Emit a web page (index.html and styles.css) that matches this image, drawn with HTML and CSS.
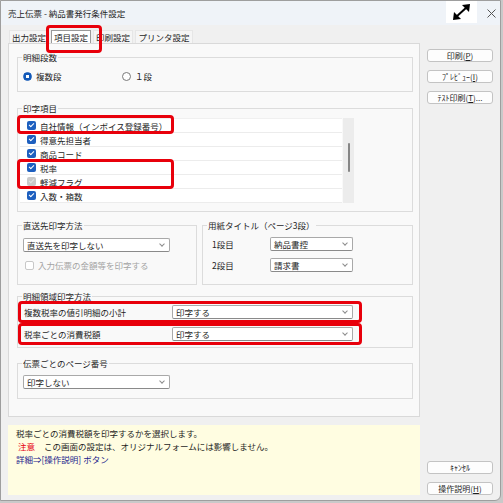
FILE: index.html
```html
<!DOCTYPE html>
<html lang="ja">
<head>
    <meta charset="UTF-8">
    <title>売上伝票 - 納品書発行条件設定</title>
    <link rel="stylesheet" href="styles.css">
</head>
<body>
<div class="window">
    <div class="titlebar">
        <span class="title">売上伝票 - 納品書発行条件設定</span>
        <span class="expand">
            <svg width="31" height="22" viewBox="0 0 31 22">
                <line x1="10" y1="16" x2="21" y2="6" stroke="#000" stroke-width="2"/>
                <polygon points="16,4 24,3 23,11" fill="#000"/>
                <polygon points="8,11 7,19 15,18" fill="#000"/>
            </svg>
        </span>
        <span class="close">
            <svg width="9" height="9" viewBox="0 0 9 9"><path d="M0.5 0.5 L8.5 8.5 M8.5 0.5 L0.5 8.5" stroke="#555" stroke-width="1"/></svg>
        </span>
    </div>

    <div class="client">
        <div class="main">
            <div class="tabs">
                <span class="tab">出力設定</span>
                <span class="tab active">項目設定</span>
                <span class="tab">印刷設定</span>
                <span class="tab tab-wide">プリンタ設定</span>
            </div>

            <div class="panel">
                <div class="grp grp-rows">
                    <div class="grp-title">明細段数</div>
                    <div class="radio-row">
                        <label class="radio-item"><span class="radio on"></span>複数段</label>
                        <label class="radio-item"><span class="radio"></span>１段</label>
                    </div>
                </div>

                <div class="grp grp-list">
                    <div class="grp-title">印字項目</div>
                    <div class="list-wrap">
                        <div class="list">
                            <div class="item"><span class="chk on"></span>自社情報（インボイス登録番号）</div>
                            <div class="item"><span class="chk on"></span>得意先担当者</div>
                            <div class="item"><span class="chk on"></span>商品コード</div>
                            <div class="item"><span class="chk on"></span>税率</div>
                            <div class="item"><span class="chk on dis"></span>軽減フラグ</div>
                            <div class="item"><span class="chk on"></span>入数・箱数</div>
                        </div>
                        <div class="scroll"><span class="thumb"></span></div>
                        <span class="hl hl-1"></span>
                        <span class="hl hl-2"></span>
                    </div>
                </div>

                <div class="pair">
                    <div class="grp grp-ship">
                        <div class="grp-title">直送先印字方法</div>
                        <div class="select wide"><span>直送先を印字しない</span><span class="chev"></span></div>
                        <label class="opt-row"><span class="chk off"></span>入力伝票の金額等を印字する</label>
                    </div>
                    <div class="grp grp-paper">
                        <div class="grp-title">用紙タイトル（ページ3段）</div>
                        <div class="title-row">
                            <span class="title-label">1段目</span>
                            <div class="select short"><span>納品書控</span><span class="chev"></span></div>
                        </div>
                        <div class="title-row">
                            <span class="title-label">2段目</span>
                            <div class="select short"><span>請求書</span><span class="chev"></span></div>
                        </div>
                    </div>
                </div>

                <div class="grp grp-detail">
                    <div class="grp-title">明細領域印字方法</div>
                    <div class="detail-row">
                        <span>複数税率の値引明細の小計</span>
                        <div class="select mid"><span>印字する</span><span class="chev"></span></div>
                    </div>
                    <div class="detail-row">
                        <span>税率ごとの消費税額</span>
                        <div class="select mid"><span>印字する</span><span class="chev"></span></div>
                    </div>
                </div>

                <div class="grp grp-page">
                    <div class="grp-title">伝票ごとのページ番号</div>
                    <div class="select wide"><span>印字しない</span><span class="chev"></span></div>
                </div>
            </div>

            <div class="message">
                <div>税率ごとの消費税額を印字するかを選択します。</div>
                <div><span class="warn">注意</span>この画面の設定は、オリジナルフォームには影響しません。</div>
                <div class="link">詳細⇒[操作説明] ボタン</div>
            </div>
        </div>

        <div class="side">
            <div class="btn-col">
                <div class="btn">印刷(<u>P</u>)</div>
                <div class="btn">ﾌﾟﾚﾋﾞｭｰ(<u>I</u>)</div>
                <div class="btn">ﾃｽﾄ印刷(<u>T</u>)...</div>
            </div>
            <div class="btn-col">
                <div class="btn">ｷｬﾝｾﾙ</div>
                <div class="btn">操作説明(<u>H</u>)</div>
            </div>
        </div>
    </div>
</div>
</body>
</html>
```

FILE: styles.css
```css
* {
    box-sizing: border-box;
}
body {
    margin: 0;
    background: #c9c9c9;
    font-family: "Noto Sans CJK JP", "Noto Sans", sans-serif;
    font-size: 8.5px;
    color: #1e1e1e;
}
.window {
    width: 501px;
    height: 501px;
    border: 1px solid #9e9e9e;
    border-radius: 0 0 6px 0;
    background: #f0f0f0;
    overflow: hidden;
}
.titlebar {
    height: 24px;
    display: flex;
    align-items: center;
    background: #eff3f8;
}
.title {
    margin-left: 7px;
}
.expand {
    margin-left: auto;
    align-self: flex-start;
    width: 31px;
    height: 22px;
    background: #fff;
}
.expand svg, .close svg {
    display: block;
}
.close {
    margin: 0 4px 0 10px;
}

.client {
    display: flex;
    height: 475px;
    padding: 5px 0 5px 7px;
}
.main {
    width: 412px;
    display: flex;
    flex-direction: column;
}

/* tabs */
.tabs {
    display: flex;
    height: 13px;
    gap: 2px;
    padding-left: 1px;
}
.tab {
    width: 40px;
    line-height: 12px;
    text-align: center;
    white-space: nowrap;
    border: 1px solid #e6e6e6;
    border-bottom: none;
    background: #f5f5f5;
}
.tab-wide {
    width: 58px;
}
.tab.active {
    position: relative;
    background: #fff;
    border-color: #9a9a9a;
}
.tab.active::after {
    content: "";
    position: absolute;
    left: -6px;
    top: -6px;
    width: 50px;
    height: 22px;
    border: 3px solid #e8000b;
    border-radius: 4px;
}

.panel {
    height: 374px;
    border: 1px solid #d9d9d9;
    background: #f9f9f9;
    padding: 13px 6px 0 8px;
}

/* group box: title sits on the top border */
.grp {
    border: 1px solid #dcdcdc;
}
.grp-title {
    display: table;
    margin: -6px 0 0 4px;
    padding: 0 1px;
    line-height: 10px;
    background: #f9f9f9;
}

/* 明細段数 */
.grp-rows {
    padding: 0 0 9px 5px;
}
.grp-rows .grp-title {
    margin-left: -1px;
}
.radio-row {
    display: flex;
    height: 12px;
    margin-top: 8px;
    align-items: center;
}
.radio-item {
    display: flex;
    align-items: center;
    gap: 4px;
    width: 99px;
}
.radio {
    width: 9px;
    height: 9px;
    border-radius: 50%;
    border: 1px solid #7a7a7a;
    background: #fff;
}
.radio.on {
    border-color: #1359b8;
    background: radial-gradient(circle, #fff 0 1.5px, #1359b8 2px);
}

/* 印字項目 */
.grp-list {
    margin-top: 16px;
    padding: 0 0 8px 2px;
}
.grp-list .grp-title {
    margin-left: 2px;
}
.list-wrap {
    position: relative;
    display: flex;
    gap: 1px;
    margin-top: 5px;
}
.list {
    width: 322px;
    border-top: 1px solid #f0f0f0;
}
.item {
    height: 14px;
    display: flex;
    align-items: center;
    gap: 4px;
    padding-left: 7px;
    background: #fff;
    border-bottom: 1px solid #ececec;
}
.scroll {
    width: 11px;
    background: #ececec;
    display: flex;
    justify-content: center;
}
.thumb {
    width: 2px;
    height: 29px;
    margin-top: 25px;
    border-radius: 1px;
    background: #868686;
}
.hl {
    position: absolute;
    border: 3px solid #e8000b;
    border-radius: 4px;
}
.hl-1 {
    left: -3px;
    top: -3px;
    width: 157px;
    height: 19px;
}
.hl-2 {
    left: -3px;
    top: 41px;
    width: 157px;
    height: 30px;
}

.chk {
    width: 9px;
    height: 9px;
    flex: none;
    border-radius: 2px;
    display: flex;
    justify-content: center;
}
.chk.on {
    background: #1d5fbf;
}
.chk.on::after {
    content: "";
    width: 2px;
    height: 4px;
    margin-top: 1px;
    border: solid #fff;
    border-width: 0 1px 1px 0;
    transform: rotate(45deg);
}
.chk.dis {
    background: #c9c9c9;
}
.chk.dis::after {
    border-color: #e4e4e4;
}
.chk.off {
    background: #fff;
    border: 1px solid #c8c8c8;
}

/* 直送先 / 用紙タイトル */
.pair {
    display: flex;
    gap: 5px;
    margin-top: 13px;
}
.grp-ship {
    width: 180px;
    padding: 0 0 13px 5px;
}
.grp-ship .grp-title {
    margin-left: -1px;
}
.grp-ship .select {
    margin-top: 8px;
}
.grp-paper {
    flex: 1;
    padding: 7px 0 0 9px;
}
.grp-paper .grp-title {
    margin: -13px 0 0 -5px;
}
.title-row {
    display: flex;
    align-items: center;
    height: 14px;
    margin-top: 7px;
}
.title-label {
    width: 58px;
}
.opt-row {
    display: flex;
    align-items: center;
    gap: 4px;
    height: 12px;
    margin: 7px 0 0 2px;
    color: #a3a3a3;
}

.select {
    height: 14px;
    display: flex;
    align-items: center;
    justify-content: space-between;
    padding: 0 5px 0 3px;
    line-height: 12px;
    background: #fff;
    border: 1px solid #a9a9a9;
    border-bottom-color: #8a8a8a;
    border-radius: 2px;
}
.select.wide {
    width: 147px;
}
.select.short {
    width: 83px;
}
.select.mid {
    width: 181px;
}
.chev {
    width: 4px;
    height: 4px;
    margin-top: -3px;
    border: solid #8c8c8c;
    border-width: 0 1px 1px 0;
    transform: rotate(45deg);
}

/* 明細領域 */
.grp-detail {
    margin-top: 11px;
    padding: 0 0 2px;
}
.detail-row {
    width: 344px;
    height: 22px;
    display: flex;
    align-items: center;
    justify-content: space-between;
    padding: 0 6px 0 3px;
    border: 3px solid #e8000b;
    border-radius: 4px;
}
.detail-row:first-of-type {
    margin-top: 2px;
}

.grp-page {
    margin-top: 15px;
    padding: 0 0 9px 5px;
}
.grp-page .grp-title {
    margin-left: -1px;
}
.grp-page .select {
    margin-top: 7px;
}

/* message */
.message {
    margin-top: 8px;
    height: 70px;
    padding: 2px 8px;
    line-height: 13px;
    background: #fffde1;
}
.warn {
    color: #e60012;
    padding-left: 2px;
    margin-right: 9px;
}
.link {
    color: #22228c;
}

/* buttons */
.side {
    width: 66px;
    margin-left: 7px;
    padding-top: 19px;
    display: flex;
    flex-direction: column;
    justify-content: space-between;
}
.btn-col {
    display: flex;
    flex-direction: column;
    gap: 8px;
}
.btn {
    height: 13px;
    line-height: 11px;
    font-size: 8px;
    text-align: center;
    background: #fdfdfd;
    border: 1px solid #c3c3c3;
    border-radius: 3px;
}
```
